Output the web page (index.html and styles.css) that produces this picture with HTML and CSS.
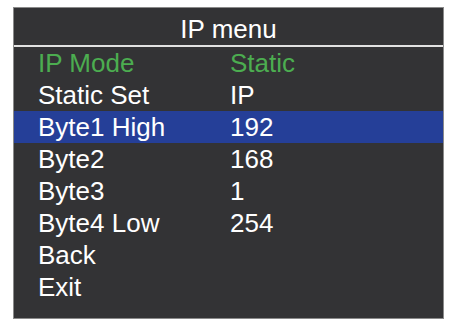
FILE: index.html
```html
<!DOCTYPE html>
<html lang="en">
<head>
    <meta charset="UTF-8">
    <title>IP menu</title>
    <link rel="stylesheet" href="styles.css">
</head>
<body>
<div class="osd">
    <div class="osd-title">IP menu</div>
    <div class="osd-rows">
        <div class="row active"><span class="label">IP Mode</span><span class="value">Static</span></div>
        <div class="row"><span class="label">Static Set</span><span class="value">IP</span></div>
        <div class="row selected"><span class="label">Byte1 High</span><span class="value">192</span></div>
        <div class="row"><span class="label">Byte2</span><span class="value">168</span></div>
        <div class="row"><span class="label">Byte3</span><span class="value">1</span></div>
        <div class="row"><span class="label">Byte4 Low</span><span class="value">254</span></div>
        <div class="row"><span class="label">Back</span></div>
        <div class="row"><span class="label">Exit</span></div>
    </div>
</div>
</body>
</html>
```

FILE: styles.css
```css
body {
    background-color: #fff;
    margin: 0;
    padding: 0;
    font-family: "Liberation Sans", Arial, sans-serif;
    font-size: 26px;
    color: #fff;
}
.osd {
    box-sizing: border-box;
    width: 431px;
    height: 312px;
    margin: 7px 0 0 13px;
    background-color: #333335;
    border: 1px solid #8a8a8a;
}
.osd-title {
    height: 31px;
    padding-top: 6px;
    line-height: 31px;
    text-align: center;
    border-bottom: 2px solid #e2e2e2;
}
.osd-rows {
    display: flex;
    flex-direction: column;
}
.osd-rows .row {
    display: flex;
    height: 32px;
    line-height: 32px;
    padding-left: 24px;
}
.osd-rows .row .label {
    width: 192px;
}
.osd-rows .row.active {
    color: #4cad50;
}
.osd-rows .row.selected {
    background-color: #253f98;
}
```
